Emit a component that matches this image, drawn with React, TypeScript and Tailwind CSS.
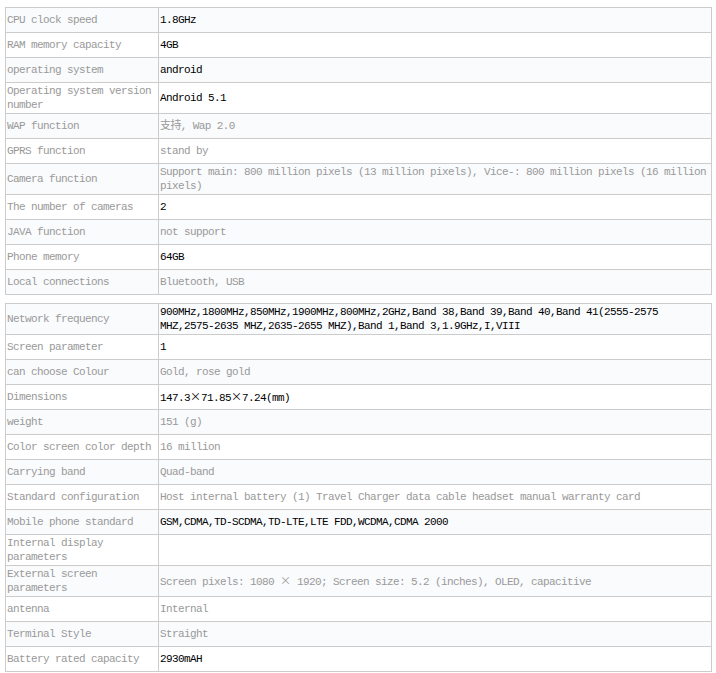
import React from "react";

type Row = { label: string; value: React.ReactNode; dark?: boolean };

const X = () => <span style={{ fontFamily: '"Noto Sans CJK SC", sans-serif' }} className="tracking-normal">×</span>;

const table1: Row[] = [
  { label: "CPU clock speed", value: "1.8GHz", dark: true },
  { label: "RAM memory capacity", value: "4GB", dark: true },
  { label: "operating system", value: "android", dark: true },
  { label: "Operating system version number", value: "Android 5.1", dark: true },
  { label: "WAP function", value: "支持, Wap 2.0" },
  { label: "GPRS function", value: "stand by" },
  {
    label: "Camera function",
    value:
      "Support main: 800 million pixels (13 million pixels), Vice-: 800 million pixels (16 million pixels)",
  },
  { label: "The number of cameras", value: "2", dark: true },
  { label: "JAVA function", value: "not support" },
  { label: "Phone memory", value: "64GB", dark: true },
  { label: "Local connections", value: "Bluetooth, USB" },
];

const table2: Row[] = [
  {
    label: "Network frequency",
    value:
      "900MHz,1800MHz,850MHz,1900MHz,800MHz,2GHz,Band 38,Band 39,Band 40,Band 41(2555-2575 MHZ,2575-2635 MHZ,2635-2655 MHZ),Band 1,Band 3,1.9GHz,I,VIII",
    dark: true,
  },
  { label: "Screen parameter", value: "1", dark: true },
  { label: "can choose Colour", value: "Gold, rose gold" },
  {
    label: "Dimensions",
    value: (
      <>
        147.3<X />71.85<X />7.24(mm)
      </>
    ),
    dark: true,
  },
  { label: "weight", value: "151 (g)" },
  { label: "Color screen color depth", value: "16 million" },
  { label: "Carrying band", value: "Quad-band" },
  {
    label: "Standard configuration",
    value: "Host internal battery (1) Travel Charger data cable headset manual warranty card",
  },
  { label: "Mobile phone standard", value: "GSM,CDMA,TD-SCDMA,TD-LTE,LTE FDD,WCDMA,CDMA 2000", dark: true },
  { label: "Internal display parameters", value: "" },
  {
    label: "External screen parameters",
    value: (
      <>
        Screen pixels: 1080 <X /> 1920; Screen size: 5.2 (inches), OLED, capacitive
      </>
    ),
  },
  { label: "antenna", value: "Internal" },
  { label: "Terminal Style", value: "Straight" },
  { label: "Battery rated capacity", value: "2930mAH", dark: true },
];

function SpecTable({ rows }: { rows: Row[] }) {
  return (
    <div className="w-[707px] border-l border-t border-[#cccccc]">
      {rows.map((r, i) => (
        <div
          key={i}
          className={`grid grid-cols-[153px_553px] ${i % 2 === 0 ? "bg-[#fafbfd]" : "bg-white"}`}
        >
          <div className="flex min-h-[25px] items-center border-b border-r border-[#cccccc] py-[1px] pl-[1px] pr-[1px] text-[#999999]">
            <span>{r.label}</span>
          </div>
          <div
            className={`flex min-h-[25px] items-center border-b border-r border-[#cccccc] py-[1px] pl-[1px] pr-[1px] ${
              r.dark ? "text-black" : "text-[#999999]"
            }`}
          >
            <span>{r.value}</span>
          </div>
        </div>
      ))}
    </div>
  );
}

export default function App() {
  return (
    <div
      className="min-h-[673px] w-[716px] bg-white pl-[5px] pt-[7px] text-[11px] leading-[14px] tracking-[-0.6px]"
      style={{ fontFamily: '"Liberation Mono", "Noto Sans CJK SC", monospace' }}
    >
      <div className="flex flex-col gap-[8px]">
        <SpecTable rows={table1} />
        <SpecTable rows={table2} />
      </div>
    </div>
  );
}
